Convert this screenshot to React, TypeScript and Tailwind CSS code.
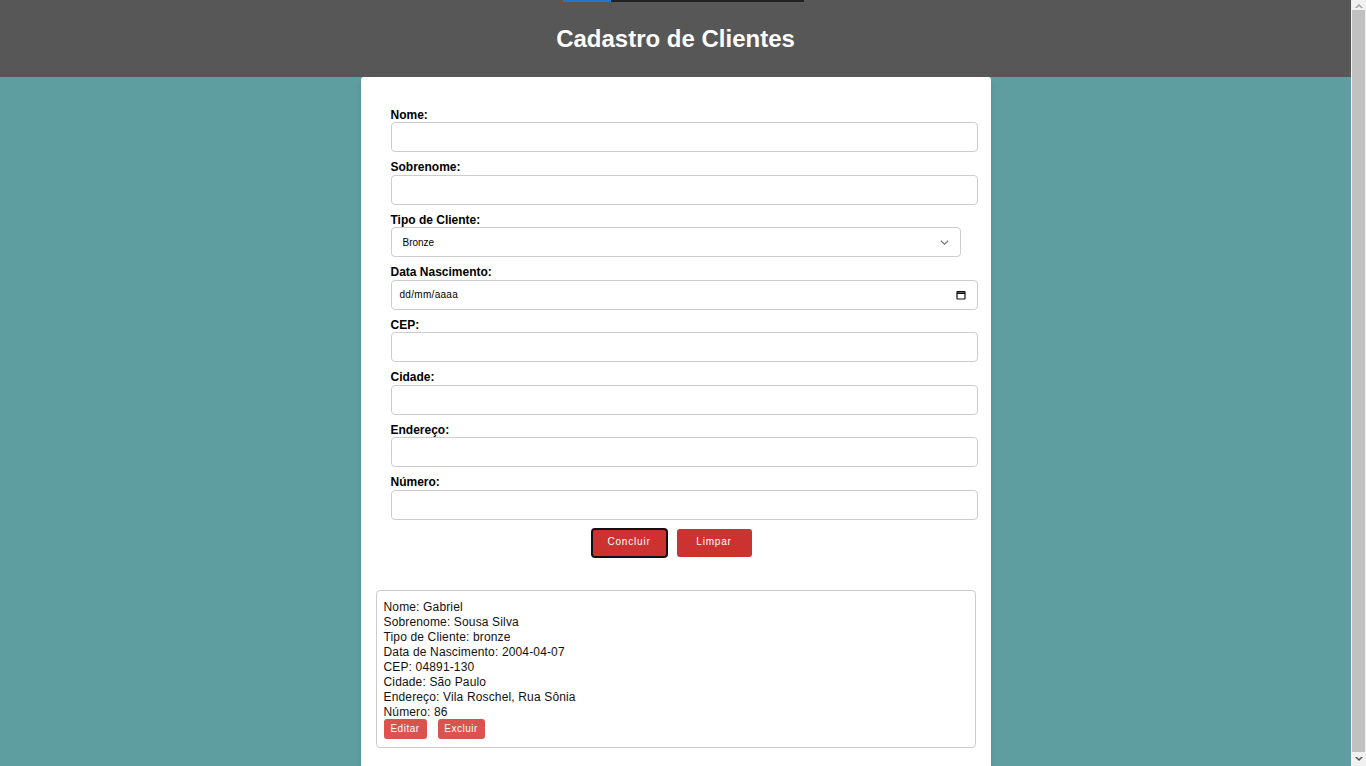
import React from 'react';

const fields = [
  { label: 'Nome:', kind: 'text' },
  { label: 'Sobrenome:', kind: 'text' },
  { label: 'Tipo de Cliente:', kind: 'select' },
  { label: 'Data Nascimento:', kind: 'date' },
  { label: 'CEP:', kind: 'text' },
  { label: 'Cidade:', kind: 'text' },
  { label: 'Endereço:', kind: 'text' },
  { label: 'Número:', kind: 'text' },
];

const client = [
  'Nome: Gabriel',
  'Sobrenome: Sousa Silva',
  'Tipo de Cliente: bronze',
  'Data de Nascimento: 2004-04-07',
  'CEP: 04891-130',
  'Cidade: São Paulo',
  'Endereço: Vila Roschel, Rua Sônia',
  'Número: 86',
];

function Field({ label, kind }: { label: string; kind: string }) {
  return (
    <div>
      <label className="block text-[12px] leading-[14.5px] font-bold text-black">{label}</label>
      {kind === 'select' ? (
        <div className="mb-[8px] flex h-[30px] w-[570px] items-center justify-between rounded-[4px] border border-[#cccccc] bg-white pl-[11px] pr-[11px] text-[10px] text-black">
          <span>Bronze</span>
          <svg width="9" height="5" viewBox="0 0 9 5" fill="none" stroke="#777" strokeWidth="1.2">
            <path d="M0.8 0.8l3.7 3.4 3.7-3.4" />
          </svg>
        </div>
      ) : kind === 'date' ? (
        <div className="mb-[8px] flex h-[30px] w-[587px] items-center justify-between rounded-[4px] border border-[#cccccc] bg-white pl-[8px] pr-[11px] text-[10px] text-black">
          <span className="tracking-[0.3px]">dd/mm/aaaa</span>
          <svg width="10" height="10" viewBox="0 0 10 10" fill="none" stroke="#111" strokeWidth="1.2">
            <rect x="1" y="1.6" width="8" height="7.4" rx="0.5" />
            <path d="M1 3.2h8" strokeWidth="1.6" />
          </svg>
        </div>
      ) : (
        <input
          type="text"
          className="mb-[8px] block h-[30px] w-[587px] rounded-[4px] border border-[#cccccc] bg-white px-[8px] text-[12px] outline-none"
        />
      )}
    </div>
  );
}

function Scrollbar() {
  return (
    <div className="flex h-screen w-[15px] shrink-0 flex-col bg-[#f1f1f1]">
      <div className="flex h-[10px] items-center justify-center">
        <svg width="8" height="5" viewBox="0 0 8 5" fill="#a3a3a3">
          <path d="M0 5L4 1 8 5H6L4 3 2 5z" />
        </svg>
      </div>
      <div className="mx-[1px] flex-1 bg-[#c1c1c1]" />
      <div className="flex h-[14px] items-center justify-center">
        <svg width="8" height="5" viewBox="0 0 8 5" fill="#505050">
          <path d="M0 0L4 4 8 0H6L4 2 2 0z" />
        </svg>
      </div>
    </div>
  );
}

export default function App() {
  return (
    <div className="flex h-screen overflow-hidden bg-[#5f9ea0] font-['Liberation_Sans',Arial,sans-serif]">
      <div className="min-h-[790px] flex-1">
        <header className="relative flex h-[77px] items-center justify-center bg-[#575757]">
          <div className="absolute left-[563px] top-0 flex h-[2px]">
            <div className="w-[48px] bg-[#1e78d2]" />
            <div className="w-[193px] bg-[#222222]" />
          </div>
          <h1 className="text-[24px] font-bold text-white">Cadastro de Clientes</h1>
        </header>

        <main className="mx-auto w-[630px] rounded-t-[3px] bg-white pb-[24px] shadow-md">
          <form className="px-[30px] pt-[30.5px]" onSubmit={(e) => e.preventDefault()}>
            {fields.map((f) => (
              <Field key={f.label} label={f.label} kind={f.kind} />
            ))}
          </form>

          <div className="flex h-[30px] items-center justify-center">
            <button className="mr-[9px] h-[30px] w-[77px] rounded-[4px] border-2 border-[#111111] bg-[#cc3330] pb-[2px] text-[10px] font-normal tracking-[0.8px] text-white">
              Concluir
            </button>
            <button className="mr-[9px] h-[28px] w-[75px] rounded-[3px] bg-[#cc3330] pb-[2px] text-[10px] font-normal tracking-[0.8px] text-white">
              Limpar
            </button>
          </div>

          <div className="mx-[15px] mt-[32px] rounded-[4px] border border-[#cccccc] px-[7px] pb-[8px] pt-[9px] text-[12px] leading-[15px] tracking-[0.15px] text-[#111111]">
            {client.map((line) => (
              <div key={line}>{line}</div>
            ))}
            <div className="-mt-[1px] flex gap-[11px]">
              <button className="h-[20px] w-[43px] rounded-[3px] bg-[#d9534f] text-[10px] tracking-[0.5px] text-white">
                Editar
              </button>
              <button className="h-[20px] w-[47px] rounded-[3px] bg-[#d9534f] text-[10px] tracking-[0.5px] text-white">
                Excluir
              </button>
            </div>
          </div>
        </main>
      </div>
      <Scrollbar />
    </div>
  );
}
